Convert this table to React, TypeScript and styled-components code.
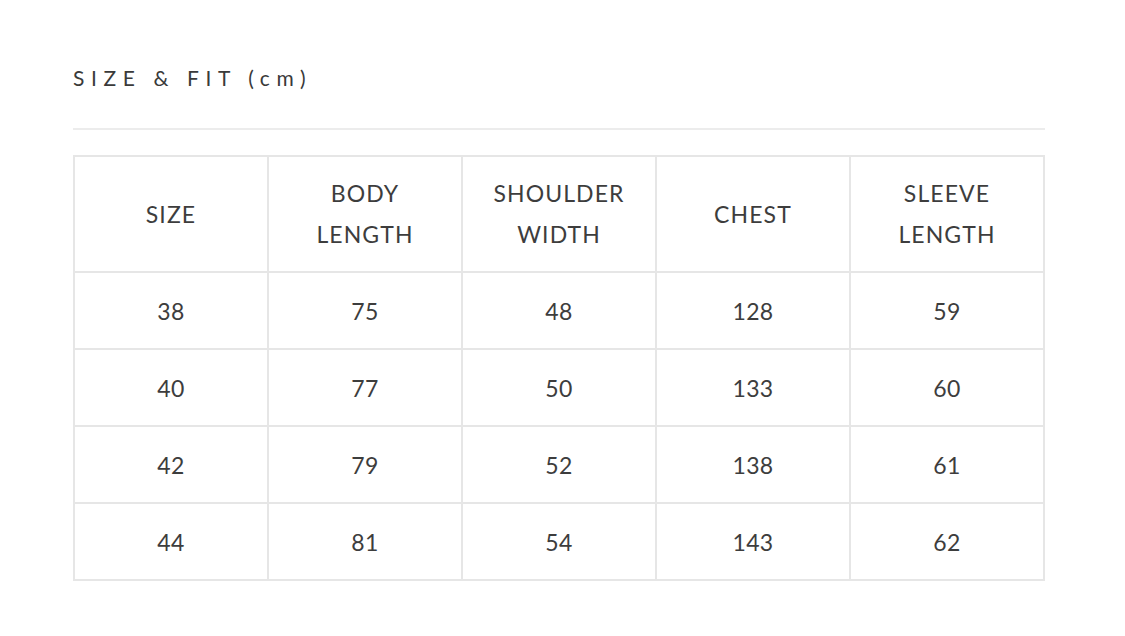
import React from "react";
import styled, { createGlobalStyle } from "styled-components";

const GlobalStyle = createGlobalStyle`
  html, body {
    margin: 0;
    padding: 0;
    background: #ffffff;
  }
  body {
    font-family: "Lato", "Liberation Sans", sans-serif;
    color: #3d3d3d;
  }
`;

const headers = [
  ["SIZE"],
  ["BODY", "LENGTH"],
  ["SHOULDER", "WIDTH"],
  ["CHEST"],
  ["SLEEVE", "LENGTH"],
];

const rows = [
  ["38", "75", "48", "128", "59"],
  ["40", "77", "50", "133", "60"],
  ["42", "79", "52", "138", "61"],
  ["44", "81", "54", "143", "62"],
];

const App = () => {
  return (
    <>
      <GlobalStyle />
      <Page>
        <Title>SIZE &amp; FIT (cm)</Title>
        <Divider />
        <Table>
          <thead>
            <tr>
              {headers.map((lines, i) => (
                <HeadCell key={i}>
                  {lines.map((l) => (
                    <HeadLine key={l}>{l}</HeadLine>
                  ))}
                </HeadCell>
              ))}
            </tr>
          </thead>
          <tbody>
            {rows.map((row, r) => (
              <tr key={r}>
                {row.map((v, c) => (
                  <Cell key={c}>{v}</Cell>
                ))}
              </tr>
            ))}
          </tbody>
        </Table>
      </Page>
    </>
  );
};

export default App;

const Page = styled.div`
  padding: 62px 80px 0 73px;
  width: 972px;
`;

const Title = styled.h2`
  margin: 0;
  font-size: 21px;
  font-weight: 400;
  letter-spacing: 6.6px;
  line-height: 32px;
  color: #3a3a3a;
`;

const Divider = styled.div`
  height: 2px;
  background: #ececec;
  margin: 34px 0 25px;
`;

const Table = styled.table`
  width: 972px;
  border-collapse: collapse;
  table-layout: fixed;
  border: 2px solid #e6e6e6;
`;

const HeadCell = styled.th`
  height: 114px;
  border: 2px solid #e6e6e6;
  font-weight: 400;
  font-size: 23px;
  letter-spacing: 1.1px;
  text-align: center;
  vertical-align: middle;
  padding: 0;
  color: #3d3d3d;
`;

const HeadLine = styled.div`
  line-height: 41px;
`;

const Cell = styled.td`
  height: 75px;
  border: 2px solid #e6e6e6;
  font-size: 23px;
  letter-spacing: 0.3px;
  text-align: center;
  vertical-align: middle;
  padding: 0;
  color: #3d3d3d;
`;
